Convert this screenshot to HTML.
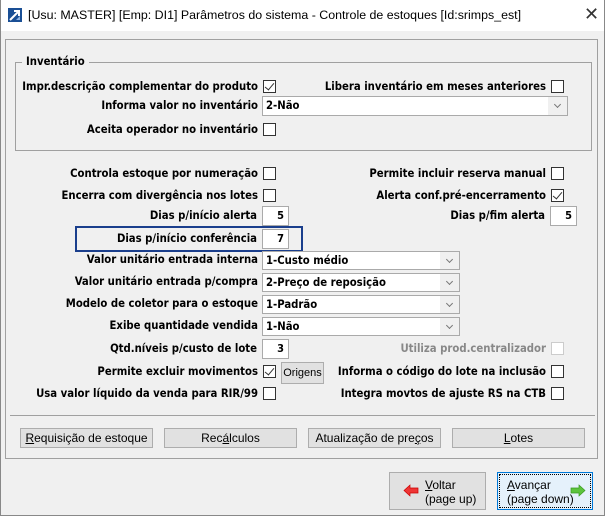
<!DOCTYPE html>
<html><head><meta charset="utf-8"><style>
*{box-sizing:border-box;margin:0;padding:0}
body{width:605px;height:516px;overflow:hidden;background:#f0f0f0;font-family:Tahoma,"DejaVu Sans Condensed","Liberation Sans",sans-serif;position:relative}
.a{position:absolute}
.t{position:absolute;font-family:"DejaVu Sans Condensed","Liberation Sans",sans-serif;font-weight:bold;font-size:11.25px;color:#000;white-space:nowrap;line-height:14px;text-align:right}
.cb{position:absolute;width:13px;height:13px;border:1px solid #333;background:#fff}
.ck::after{content:"";position:absolute;left:3px;top:0px;width:4px;height:8px;border-right:1px solid #333;border-bottom:1px solid #333;transform:rotate(40deg)}
.in{position:absolute;background:#fff;border:1px solid #aaa;font-family:"DejaVu Sans Condensed",sans-serif;font-weight:bold;font-size:11px;text-align:right;padding-right:4px;line-height:18px}
.sel{position:absolute;background:#fff;border:1px solid #aaa;font-family:"DejaVu Sans Condensed",sans-serif;font-weight:bold;font-size:11.25px;padding-left:3px;line-height:17px}
.sel::after{content:"";position:absolute;right:0;top:0;bottom:0;width:19px;background:#f0f0f0}
.sel::before{content:"";position:absolute;right:7px;top:5px;width:4px;height:4px;border-right:1px solid #777;border-bottom:1px solid #777;transform:rotate(45deg);z-index:2}
.btn{position:absolute;background:#e1e1e1;border:1px solid #adadad;font-family:"Liberation Sans",sans-serif;font-size:12px;text-align:center;line-height:19px;color:#000}
</style></head><body>
<div class="a" style="left:0;top:0;width:605px;height:31px;background:#fff"></div>
<div class="a" style="left:0;top:0;width:605px;height:516px;border:1px solid #888;border-top:none"></div>
<svg class="a" style="left:8px;top:8px" width="14" height="14"><rect width="14" height="14" fill="#1a4f95"/><path d="M2 12 L11 3 M6 3 H11 V8" stroke="#fff" stroke-width="2" fill="none"/><path d="M8 12 L12 8 L12 12Z" fill="#8fb4e3"/></svg>
<div class="a" style="left:28px;top:8px;font-family:'Liberation Sans',sans-serif;font-size:12.4px;color:#000">[Usu: MASTER] [Emp: DI1] Parâmetros do sistema - Controle de estoques [Id:srimps_est]</div>
<div class="a" style="left:584px;top:4px;font-family:'Liberation Sans',sans-serif;font-size:18px;color:#333">✕</div>

<div class="a" style="left:5px;top:39px;width:593px;height:420px;border:1px solid #a0a0a0"></div>
<div class="a" style="left:15px;top:62px;width:577px;height:89px;border:1px solid #a0a0a0"></div>
<div class="t" style="left:22px;top:55px;background:#f0f0f0;padding:0 4px">Inventário</div>

<div class="t" style="right:347px;top:80px">Impr.descrição complementar do produto</div><div class="cb ck" style="left:263px;top:80px"></div>
<div class="t" style="right:59px;top:80px">Libera inventário em meses anteriores</div><div class="cb" style="left:551px;top:80px"></div>
<div class="t" style="right:347px;top:99px">Informa valor no inventário</div><div class="sel" style="left:262px;top:96px;width:306px;height:20px">2-Não</div>
<div class="t" style="right:347px;top:123px">Aceita operador no inventário</div><div class="cb" style="left:263px;top:123px"></div>

<div class="t" style="right:347px;top:167px">Controla estoque por numeração</div><div class="cb" style="left:263px;top:167px"></div>
<div class="t" style="right:59px;top:167px">Permite incluir reserva manual</div><div class="cb" style="left:551px;top:167px"></div>
<div class="t" style="right:347px;top:189px">Encerra com divergência nos lotes</div><div class="cb" style="left:263px;top:189px"></div>
<div class="t" style="right:59px;top:189px">Alerta conf.pré-encerramento</div><div class="cb ck" style="left:551px;top:189px"></div>
<div class="t" style="right:348px;top:209px">Dias p/início alerta</div><div class="in" style="left:262px;top:206px;width:27px;height:20px">5</div>
<div class="t" style="right:60px;top:209px">Dias p/fim alerta</div><div class="in" style="left:550px;top:206px;width:27px;height:20px">5</div>
<div class="a" style="left:75px;top:226px;width:228px;height:26px;border:2px solid #1a3e8c"></div>
<div class="t" style="right:348px;top:232px">Dias p/início conferência</div><div class="in" style="left:262px;top:229px;width:27px;height:20px">7</div>
<div class="t" style="right:347px;top:253px">Valor unitário entrada interna</div><div class="sel" style="left:262px;top:251px;width:198px;height:19px">1-Custo médio</div>
<div class="t" style="right:347px;top:275px">Valor unitário entrada p/compra</div><div class="sel" style="left:262px;top:273px;width:198px;height:19px">2-Preço de reposição</div>
<div class="t" style="right:347px;top:297px">Modelo de coletor para o estoque</div><div class="sel" style="left:262px;top:295px;width:198px;height:19px">1-Padrão</div>
<div class="t" style="right:347px;top:319px">Exibe quantidade vendida</div><div class="sel" style="left:262px;top:317px;width:198px;height:19px">1-Não</div>
<div class="t" style="right:348px;top:342px">Qtd.níveis p/custo de lote</div><div class="in" style="left:262px;top:339px;width:27px;height:20px">3</div>
<div class="t" style="right:59px;top:342px;color:#888">Utiliza prod.centralizador</div><div class="cb" style="left:551px;top:342px;border-color:#ccc"></div>
<div class="t" style="right:347px;top:365px">Permite excluir movimentos</div><div class="cb ck" style="left:263px;top:365px"></div>
<div class="btn" style="left:281px;top:362px;width:43px;height:22px;font-size:11px;line-height:20px">Origens</div>
<div class="t" style="right:59px;top:365px">Informa o código do lote na inclusão</div><div class="cb" style="left:551px;top:365px"></div>
<div class="t" style="right:347px;top:387px">Usa valor líquido da venda para RIR/99</div><div class="cb" style="left:263px;top:387px"></div>
<div class="t" style="right:59px;top:387px">Integra movtos de ajuste RS na CTB</div><div class="cb" style="left:551px;top:387px"></div>

<div class="a" style="left:10px;top:415px;width:585px;height:1px;background:#a0a0a0"></div>
<div class="btn" style="left:20px;top:428px;width:133px;height:20px"><u>R</u>equisição de estoque</div>
<div class="btn" style="left:164px;top:428px;width:133px;height:20px">Rec<u>á</u>lculos</div>
<div class="btn" style="left:308px;top:428px;width:133px;height:20px">Atualização de pre<u>ç</u>os</div>
<div class="btn" style="left:452px;top:428px;width:133px;height:20px"><u>L</u>otes</div>

<div class="btn" style="left:389px;top:472px;width:97px;height:38px;text-align:left;line-height:14px;padding:5px 0 0 35px"><u>V</u>oltar<br>(page up)</div>
<svg class="a" style="left:403px;top:484px" width="16" height="13"><path d="M1 6.5 L7 1 V4 H15 V9 H7 V12Z" fill="#ee3535" stroke="#c00" stroke-width="0.7"/></svg>
<div class="btn" style="left:497px;top:472px;width:96px;height:38px;text-align:left;line-height:14px;padding:5px 0 0 9px;background:#e5f1fb;border:1px solid #0078d7;outline:1px dotted #000;outline-offset:-3px"><u>A</u>vançar<br>(page down)</div>
<svg class="a" style="left:570px;top:484px" width="16" height="13"><path d="M15 6.5 L9 1 V4 H1 V9 H9 V12Z" fill="#5cc43c" stroke="#3a9a22" stroke-width="0.7"/></svg>
</body></html>
